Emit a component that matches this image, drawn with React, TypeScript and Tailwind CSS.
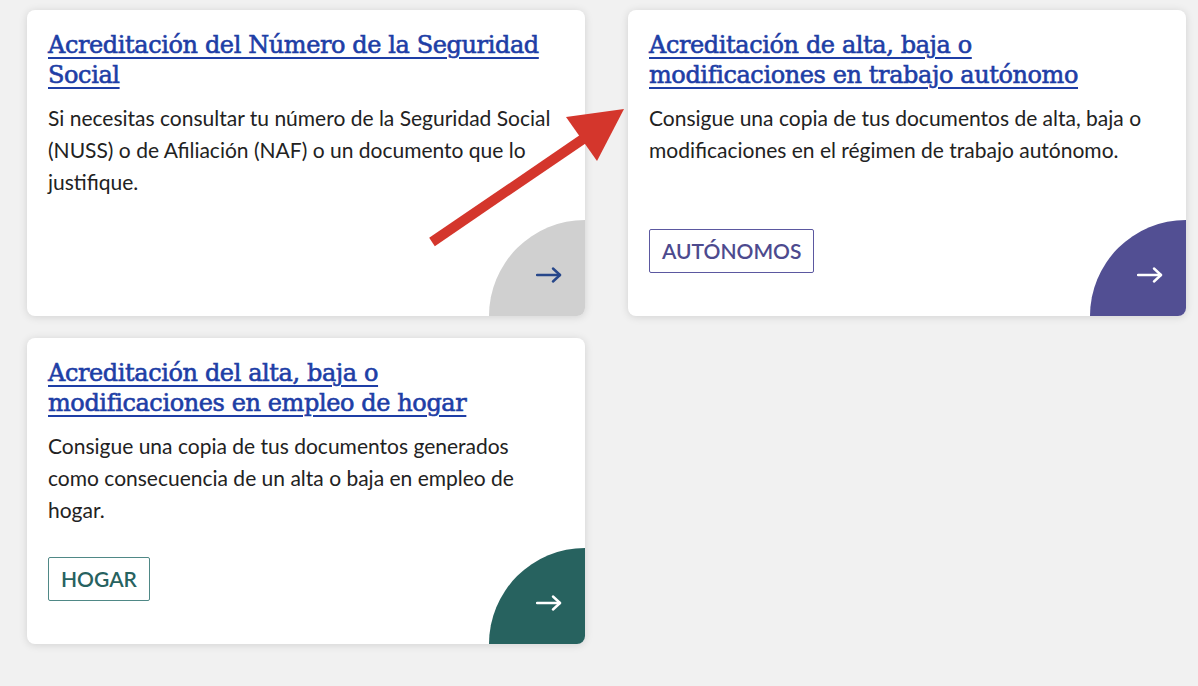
import React from "react";

type Card = {
  title: string[];
  desc: string;
  tag?: string;
  tone: "gray" | "purple" | "teal";
};

const cards: Card[] = [
  {
    title: ["Acreditación del Número de la Seguridad", "Social"],
    desc: "Si necesitas consultar tu número de la Seguridad Social (NUSS) o de Afiliación (NAF) o un documento que lo justifique.",
    tone: "gray",
  },
  {
    title: ["Acreditación de alta, baja o", "modificaciones en trabajo autónomo"],
    desc: "Consigue una copia de tus documentos de alta, baja o modificaciones en el régimen de trabajo autónomo.",
    tag: "AUTÓNOMOS",
    tone: "purple",
  },
  {
    title: ["Acreditación del alta, baja o", "modificaciones en empleo de hogar"],
    desc: "Consigue una copia de tus documentos generados como consecuencia de un alta o baja en empleo de hogar.",
    tag: "HOGAR",
    tone: "teal",
  },
];

function Arrow({ color }: { color: string }) {
  return (
    <svg width="26" height="16" viewBox="0 0 26 16" fill="none">
      <path d="M1 8H24" stroke={color} strokeWidth="2.4" strokeLinecap="round" />
      <path d="M17 1.5L24 8L17 14.5" stroke={color} strokeWidth="2.4" strokeLinecap="round" strokeLinejoin="round" />
    </svg>
  );
}

function CardView({ c }: { c: Card }) {
  const corner =
    c.tone === "gray" ? "bg-[#d0d0d0]" : c.tone === "purple" ? "bg-[#524f93]" : "bg-[#27625f]";
  const arrowColor = c.tone === "gray" ? "#27478a" : "#ffffff";
  const tagCls =
    c.tone === "purple"
      ? "border-[#5b58a0] text-[#4d4a8e]"
      : "border-[#4f8886] text-[#27625f]";
  return (
    <div className="relative flex flex-col overflow-hidden rounded-lg bg-white pl-[21px] pr-[25px] pt-[20px] pb-[43px] shadow-[0_1px_8px_rgba(0,0,0,0.13)]">
      <a
        href="#"
        className="block text-[24px] leading-[30px] tracking-[-0.4px] text-[#1e3ea6] underline decoration-[1.5px] underline-offset-[4px] [-webkit-text-stroke:0.6px]"
        style={{ fontFamily: '"DejaVu Serif", "Liberation Serif", serif' }}
      >
        {c.title.map((t, i) => (
          <span key={i} className="block">
            {t}
          </span>
        ))}
      </a>
      <p
        className="mt-[12px] text-[21px] leading-[32px] text-[#222222]"
        style={{ fontFamily: 'Lato, "Liberation Sans", sans-serif' }}
      >
        {c.desc}
      </p>
      {c.tag && (
        <div className="mt-auto pt-[31px]">
          <span
            className={`inline-flex h-[44px] items-center rounded-[2px] border px-[12px] text-[21px] font-semibold ${tagCls}`}
            style={{ fontFamily: 'Lato, "Liberation Sans", sans-serif' }}
          >
            {c.tag}
          </span>
        </div>
      )}
      <div className={`absolute bottom-0 right-0 flex h-[96px] w-[96px] items-start justify-start rounded-tl-full ${corner}`}>
        <div className="ml-[47px] mt-[47px]">
          <Arrow color={arrowColor} />
        </div>
      </div>
    </div>
  );
}

export default function App() {
  return (
    <div className="relative min-h-[686px] w-full bg-[#f1f1f1]">
      <div className="grid w-[1186px] auto-rows-fr grid-cols-2 gap-x-[43px] gap-y-[22px] pl-[27px] pt-[10px]">
        {cards.map((c, i) => (
          <CardView key={i} c={c} />
        ))}
      </div>
      <svg
        className="pointer-events-none absolute left-0 top-0"
        width="1198"
        height="686"
        viewBox="0 0 1198 686"
      >
        <line x1="432" y1="242" x2="586" y2="137" stroke="#d4362c" strokeWidth="10" />
        <polygon points="624,109 566,117 597,161" fill="#d4362c" />
      </svg>
    </div>
  );
}
